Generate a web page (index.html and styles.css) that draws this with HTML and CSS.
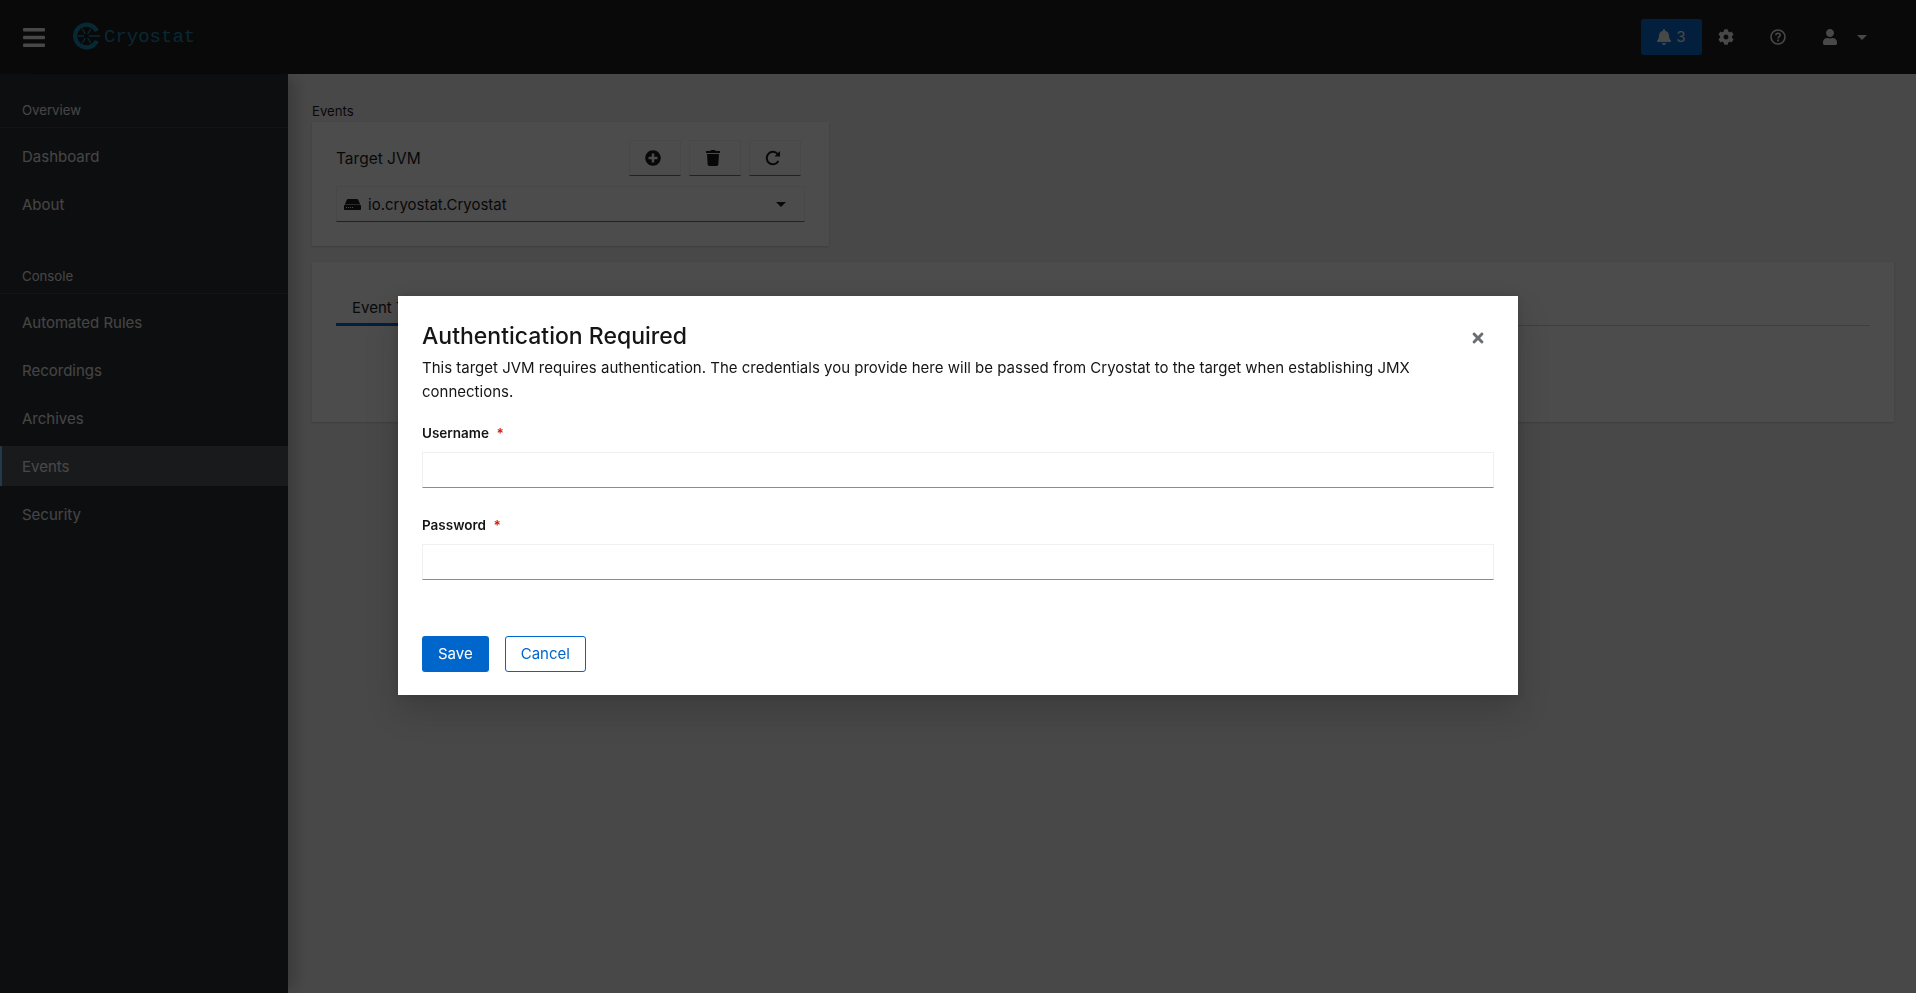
FILE: index.html
```html
<!doctype html>
<html>
<head>
  <meta charset="utf-8">
  <meta name="viewport" content="width=device-width, initial-scale=1">
  <title>Cryostat</title>
  <link rel="stylesheet" href="styles.css">
</head>
<body>

  <header class="masthead">
    <button class="menu-toggle">
      <svg class="icon-bars" viewBox="0 0 448 512"><path d="M16 132h416c8.837 0 16-7.163 16-16V76c0-8.837-7.163-16-16-16H16C7.163 60 0 67.163 0 76v40c0 8.837 7.163 16 16 16zm0 160h416c8.837 0 16-7.163 16-16v-40c0-8.837-7.163-16-16-16H16c-8.837 0-16 7.163-16 16v40c0 8.837 7.163 16 16 16zm0 160h416c8.837 0 16-7.163 16-16v-40c0-8.837-7.163-16-16-16H16c-8.837 0-16 7.163-16 16v40c0 8.837 7.163 16 16 16z"/></svg>
    </button>
    <div class="brand">
      <svg class="brand-mark" viewBox="0 0 28 28">
        <path class="wheel" d="M24.700 9A11.800 11.800 0 1 0 24.700 19"/>
        <path class="spokes" d="M5 14h6.500M16.500 14H28M9.500 6.500l3.200 5.400M15.300 16.100l3.200 5.400M18.500 6.500l-3.200 5.400M12.700 16.100l-3.200 5.400"/>
      </svg>
      <span class="brand-name">Cryostat</span>
    </div>
    <div class="tools">
      <button class="bell">
        <svg class="icon-14" viewBox="0 0 448 512"><path d="M224 512c35.320 0 63.970-28.650 63.970-64H160.030c0 35.350 28.650 64 63.970 64zm215.390-149.710c-19.320-20.760-55.470-51.990-55.470-154.290 0-77.700-54.480-139.900-127.940-155.160V32c0-17.670-14.320-32-31.980-32s-31.980 14.330-31.980 32v20.840C118.560 68.100 64.080 130.300 64.080 208c0 102.300-36.150 133.530-55.470 154.290-6 6.450-8.660 14.160-8.610 21.710.11 16.400 12.980 32 32.100 32h383.800c19.120 0 32-15.600 32.100-32 .05-7.550-2.610-15.270-8.610-21.710z"/></svg>
        <span>3</span>
      </button>
      <button class="tool">
        <svg class="icon-16" viewBox="0 0 512 512"><path d="M487.400 315.700l-42.600-24.600c4.300-23.200 4.300-47 0-70.200l42.600-24.600c4.900-2.800 7.100-8.600 5.500-14-11.100-35.600-30-67.800-54.700-94.600-3.800-4.100-10-5.100-14.800-2.300L380.800 110c-17.900-15.400-38.500-27.300-60.800-35.100V25.800c0-5.600-3.900-10.500-9.400-11.700-36.700-8.200-74.300-7.800-109.200 0-5.500 1.200-9.400 6.100-9.400 11.700V75c-22.200 7.900-42.800 19.800-60.800 35.100L88.700 85.500c-4.900-2.800-11-1.900-14.800 2.300-24.700 26.700-43.600 58.900-54.700 94.600-1.700 5.400.6 11.200 5.500 14L67.300 221c-4.300 23.200-4.300 47 0 70.200l-42.600 24.600c-4.900 2.800-7.100 8.600-5.500 14 11.100 35.600 30 67.800 54.700 94.600 3.800 4.100 10 5.100 14.800 2.300l42.600-24.600c17.900 15.400 38.500 27.300 60.800 35.100v49.200c0 5.600 3.900 10.500 9.400 11.700 36.700 8.200 74.300 7.800 109.200 0 5.500-1.200 9.400-6.100 9.400-11.700v-49.200c22.200-7.900 42.800-19.800 60.800-35.100l42.600 24.600c4.900 2.800 11 1.900 14.800-2.300 24.700-26.700 43.600-58.900 54.700-94.600 1.500-5.500-.7-11.300-5.600-14.100zM256 336c-44.100 0-80-35.900-80-80s35.900-80 80-80 80 35.900 80 80-35.900 80-80 80z"/></svg>
      </button>
      <button class="tool">
        <svg class="icon-16" viewBox="0 0 16 16">
          <circle class="ring" cx="8" cy="8" r="7"/>
          <path class="ring" d="M5.800 6.200C5.900 4.900 6.800 4.200 8 4.200c1.300 0 2.200.8 2.200 1.900 0 1.800-2.200 1.700-2.200 3.500"/>
          <rect x="7.100" y="10.600" width="1.800" height="1.800" rx=".3"/>
        </svg>
      </button>
      <button class="tool">
        <svg class="icon-16" viewBox="0 0 448 512"><path d="M224 256c70.700 0 128-57.300 128-128S294.700 0 224 0 96 57.300 96 128s57.300 128 128 128zm89.600 32h-16.700c-22.200 10.200-46.900 16-72.900 16s-50.600-5.800-72.900-16h-16.700C60.200 288 0 348.200 0 422.400V464c0 26.500 21.500 48 48 48h352c26.500 0 48-21.500 48-48v-41.600c0-74.200-60.200-134.400-134.400-134.400z"/></svg>
      </button>
      <span class="caret caret-light"></span>
    </div>
  </header>

  <div class="page-body">
    <nav class="sidebar">
      <h2 class="nav-title">Overview</h2>
      <ul class="nav-list">
        <li class="nav-item">Dashboard</li>
        <li class="nav-item">About</li>
      </ul>
      <h2 class="nav-title">Console</h2>
      <ul class="nav-list">
        <li class="nav-item">Automated Rules</li>
        <li class="nav-item">Recordings</li>
        <li class="nav-item">Archives</li>
        <li class="nav-item is-current">Events</li>
        <li class="nav-item">Security</li>
      </ul>
    </nav>

    <main class="content">
      <div class="crumb">Events</div>
      <section class="card target-card">
        <div class="target-head">
          <span class="target-label">Target JVM</span>
          <div class="target-actions">
            <button class="plain-btn">
              <svg class="icon-16" viewBox="0 0 512 512"><path d="M256 8C119 8 8 119 8 256s111 248 248 248 248-111 248-248S393 8 256 8zm144 276c0 6.600-5.400 12-12 12h-92v92c0 6.600-5.400 12-12 12h-56c-6.600 0-12-5.400-12-12v-92h-92c-6.600 0-12-5.400-12-12v-56c0-6.600 5.400-12 12-12h92v-92c0-6.600 5.400-12 12-12h56c6.600 0 12 5.400 12 12v92h92c6.600 0 12 5.400 12 12v56z"/></svg>
            </button>
            <button class="plain-btn">
              <svg class="icon-16" viewBox="0 0 448 512"><path d="M432 32H312l-9.400-18.700A24 24 0 0 0 281.100 0H166.800a23.720 23.720 0 0 0-21.400 13.300L136 32H16A16 16 0 0 0 0 48v32a16 16 0 0 0 16 16h416a16 16 0 0 0 16-16V48a16 16 0 0 0-16-16zM53.200 467a48 48 0 0 0 47.900 45h245.800a48 48 0 0 0 47.900-45L416 128H32z"/></svg>
            </button>
            <button class="plain-btn">
              <svg class="icon-redo" viewBox="0 0 16 16">
                <path class="redo-arc" d="M12.700 4.100A6.200 6.200 0 1 0 13.400 11"/>
                <path d="M15 1v5.500H9.500z"/>
              </svg>
            </button>
          </div>
        </div>
        <div class="select">
          <svg class="icon-server" viewBox="0 0 17 11">
            <path d="M4 0h9c.6 0 1.100.3 1.300.9L16.300 5.500H.7L2.700.9C2.900.3 3.400 0 4 0zM1 6h15c.6 0 1 .4 1 1v3c0 .6-.4 1-1 1H1c-.6 0-1-.4-1-1V7c0-.6.4-1 1-1z"/>
            <path class="server-dots" d="M2 8h1v1H2zM4 8h1v1H4zM6 8h1v1H6zM8 8h1v1H8z"/>
          </svg>
          <span class="select-text">io.cryostat.Cryostat</span>
          <span class="caret"></span>
        </div>
      </section>

      <section class="card tabs-card">
        <div class="tabs">
          <span class="tab is-current">Event Templates</span>
          <span class="tab">Event Types</span>
        </div>
      </section>
    </main>
  </div>

  <div class="backdrop">
    <div class="modal">
      <button class="modal-close">
        <svg class="icon-close" viewBox="0 0 352 512"><path d="M242.720 256l100.070-100.070c12.280-12.280 12.280-32.190 0-44.480l-22.240-22.240c-12.280-12.280-32.190-12.280-44.480 0L176 189.280 75.930 89.210c-12.280-12.280-32.190-12.280-44.480 0L9.210 111.450c-12.280 12.280-12.280 32.190 0 44.480L109.280 256 9.210 356.070c-12.280 12.280-12.280 32.190 0 44.480l22.240 22.240c12.280 12.280 32.200 12.280 44.480 0L176 322.720l100.070 100.070c12.280 12.280 32.200 12.280 44.480 0l22.240-22.240c12.280-12.280 12.280-32.190 0-44.480L242.720 256z"/></svg>
      </button>
      <h1 class="modal-title">Authentication Required</h1>
      <p class="modal-desc">This target JVM requires authentication. The credentials you provide here will be passed from Cryostat to the target when establishing JMX connections.</p>
      <form class="auth-form">
        <div class="field">
          <label class="field-label">Username <span class="required">*</span></label>
          <input class="field-input" type="text">
        </div>
        <div class="field">
          <label class="field-label">Password <span class="required">*</span></label>
          <input class="field-input" type="password">
        </div>
        <div class="form-actions">
          <button type="button" class="btn btn-primary">Save</button>
          <button type="button" class="btn btn-secondary">Cancel</button>
        </div>
      </form>
    </div>
  </div>

</body>
</html>
```

FILE: styles.css
```css
* {
  box-sizing: border-box;
}

html, body {
  height: 100%;
}

body {
  margin: 0;
  display: flex;
  flex-direction: column;
  overflow: hidden;
  background: #f0f0f0;
  color: #151515;
  font-family: Inter, "Noto Sans", sans-serif;
  font-size: 15px;
  line-height: 24px;
}

button {
  font: inherit;
  border: 0;
  padding: 0;
  background: none;
  color: inherit;
}

svg {
  display: block;
  fill: currentColor;
}

.icon-14 { width: 14px; height: 16px; }
.icon-16 { width: 16px; height: 16px; }

/* masthead */

.masthead {
  flex: none;
  height: 74px;
  display: flex;
  align-items: center;
  background: #191919;
  color: #f0f0f0;
}

.menu-toggle {
  width: 22px;
  margin-left: 23px;
}

.icon-bars {
  width: 22px;
  height: 25px;
}

.brand {
  display: flex;
  align-items: center;
  gap: 4px;
  margin-left: 28px;
  color: #1583aa;
}

.brand-mark {
  width: 27px;
  height: 28px;
  margin-bottom: 2px;
  fill: none;
}

.wheel {
  fill: none;
  stroke: currentColor;
  stroke-width: 4.500;
}

.spokes {
  fill: none;
  stroke: currentColor;
  stroke-width: 1.400;
}

.brand-name {
  font-family: "Liberation Mono", monospace;
  font-size: 19px;
}

.tools {
  margin-left: auto;
  margin-right: 49px;
  display: flex;
  align-items: center;
  gap: 4px;
}

.bell {
  width: 61px;
  height: 36px;
  margin-right: -4px;
  display: flex;
  align-items: center;
  justify-content: center;
  gap: 5px;
  border-radius: 3px;
  background: #0066cc;
}

.tool {
  width: 48px;
  height: 36px;
  display: flex;
  align-items: center;
  justify-content: center;
}

.ring {
  fill: none;
  stroke: currentColor;
  stroke-width: 1.600;
}

.caret {
  width: 0;
  height: 0;
  border-left: 5px solid transparent;
  border-right: 5px solid transparent;
  border-top: 5px solid currentColor;
}

.caret-light {
  margin-left: -1px;
}

/* sidebar */

.page-body {
  flex: 1;
  display: flex;
  min-height: 0;
}

.sidebar {
  flex: none;
  width: 288px;
  padding-top: 24px;
  background: #26292d;
  color: #e6e6e6;
  box-shadow: 12px 0 12px -4px rgba(3, 3, 3, .18);
}

.nav-title {
  margin: 0;
  height: 30px;
  padding-left: 22px;
  border-bottom: 1px solid #3f4245;
  font-size: 13.200px;
  font-weight: 400;
  line-height: 24px;
}

.nav-list {
  list-style: none;
  margin: 0 0 40px;
  padding: 8px 0 0;
}

.nav-item {
  height: 40px;
  margin-bottom: 8px;
  padding: 9px 22px 0;
}

.nav-item.is-current {
  background: #505356;
  border-left: 2px solid #73bcf7;
  padding-left: 20px;
  color: #f0f0f0;
}

/* main */

.content {
  flex: 1;
  min-width: 0;
  padding: 24px 22px 0 24px;
}

.crumb {
  height: 24px;
  padding-top: 1px;
  font-size: 13.200px;
  line-height: 24px;
}

.card {
  background: #fff;
  box-shadow: 0 1px 2px 0 rgba(3, 3, 3, .12), 0 0 2px 0 rgba(3, 3, 3, .06);
}

.target-card {
  width: 517px;
  height: 124px;
  padding: 18px 24px 0;
}

.target-head {
  display: flex;
  align-items: center;
  justify-content: space-between;
  padding-right: 4px;
}

.target-label {
  padding-top: 2px;
  font-size: 15.500px;
}

.target-actions {
  display: flex;
  gap: 8px;
}

.plain-btn {
  width: 52px;
  height: 36px;
  display: flex;
  align-items: center;
  justify-content: center;
  padding-right: 4px;
  border: 1px solid #f0f0f0;
  border-bottom-color: #6a6e73;
}

.icon-redo {
  width: 16px;
  height: 16px;
}

.redo-arc {
  fill: none;
  stroke: currentColor;
  stroke-width: 2;
}

.select {
  height: 36px;
  margin-top: 10px;
  display: flex;
  align-items: center;
  padding: 0 18px 0 7px;
  border: 1px solid #f0f0f0;
  border-bottom-color: #6a6e73;
}

.icon-server {
  width: 17px;
  height: 11px;
}

.server-dots {
  fill: #fff;
}

.select-text {
  flex: 1;
  margin-left: 7px;
  padding-top: 1px;
}

.tabs-card {
  height: 160px;
  margin-top: 16px;
  padding: 24px 24px 0;
}

.tabs {
  display: flex;
  height: 40px;
  border-bottom: 1px solid #d2d2d2;
}

.tab {
  height: 40px;
  padding: 10px 16px 0;
}

.tab.is-current {
  border-bottom: 3px solid #0066cc;
}

/* auth dialog */

.backdrop {
  position: fixed;
  inset: 0;
  display: flex;
  align-items: center;
  justify-content: center;
  background: rgba(3, 3, 3, .71);
}

.modal {
  position: relative;
  width: 1120px;
  height: 399px;
  margin-bottom: 2px;
  padding: 25px 24px 24px;
  background: #fff;
  box-shadow: 0 16px 32px 0 rgba(3, 3, 3, .16), 0 0 8px 0 rgba(3, 3, 3, .1);
}

.modal-close {
  position: absolute;
  top: 34px;
  right: 34px;
  color: #6a6e73;
}

.icon-close {
  width: 12px;
  height: 16px;
}

.modal-title {
  margin: 0 0 5px;
  font-size: 23px;
  font-weight: 500;
  line-height: 30px;
}

.modal-desc {
  margin: 0;
  line-height: 24px;
}

.auth-form {
  margin-top: 17px;
}

.field {
  margin-bottom: 25px;
}

.field-label {
  display: block;
  height: 24px;
  margin-bottom: 7px;
  font-size: 13.500px;
  font-weight: 600;
  line-height: 24px;
}

.required {
  margin-left: 4px;
  color: #c9190b;
}

.field-input {
  display: block;
  width: 100%;
  height: 36px;
  border: 1px solid #f0f0f0;
  border-bottom-color: #8a8d90;
  background: #fff;
  outline: 0;
}

.form-actions {
  margin-top: 56px;
  display: flex;
  gap: 16px;
}

.btn {
  height: 36px;
  padding: 0 16px;
  border-radius: 3px;
}

.btn-primary {
  background: #0066cc;
  color: #fff;
}

.btn-secondary {
  padding: 0 15px;
  border: 1px solid #0066cc;
  color: #0066cc;
}
```
